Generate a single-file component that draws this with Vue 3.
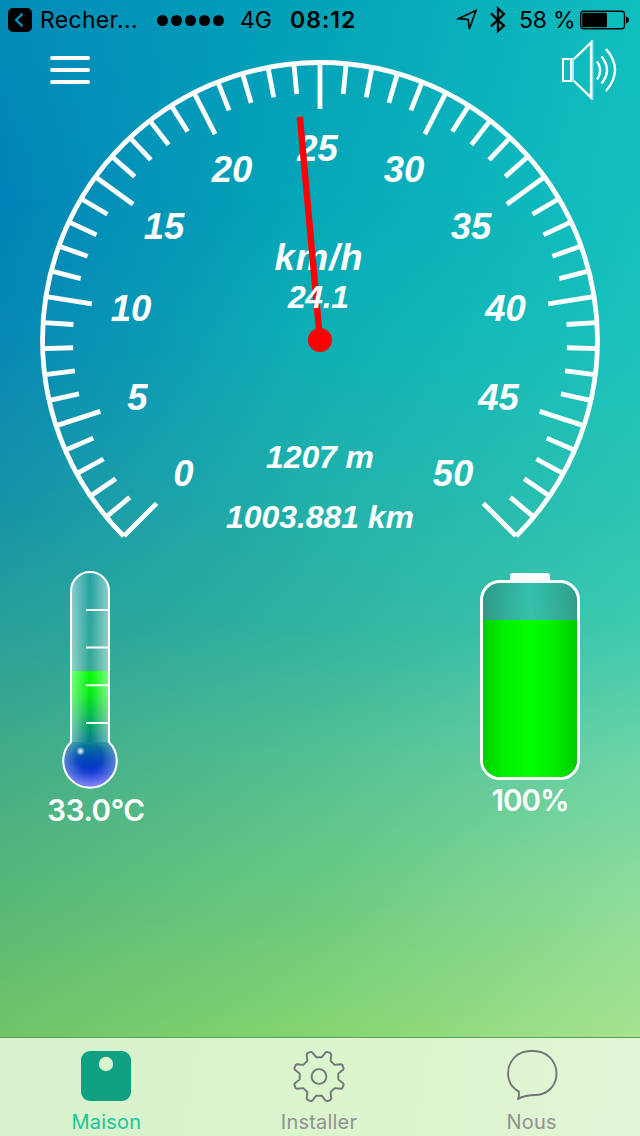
<template>
  <div class="screen">
    <div class="backdrop">
      <div v-for="(layer, i) in layers" :key="i" class="layer" :style="layer"></div>
    </div>

    <div class="page">
      <header class="status">
        <svg class="back" width="24" height="24" viewBox="0 0 24 24">
          <rect width="24" height="24" rx="5" />
          <path d="M14.6 5.6 8.2 12l6.4 6.4" fill="none" stroke="#0590b9" stroke-width="2.4" />
        </svg>
        <span class="app-name">Recher...</span>
        <div class="signal"><i v-for="n in 5" :key="n"></i></div>
        <span class="network">4G</span>
        <span class="time">08:12</span>
        <svg class="location" width="22" height="22" viewBox="0 0 22 22">
          <path d="M2.6 9.6 20 1.600 13.300 20 12.200 10.400Z" fill="none" stroke="#000" stroke-width="1.6" />
        </svg>
        <svg class="bluetooth" width="16" height="28" viewBox="0 0 16 28">
          <path d="M1 7.3 14 19.8 8 25V2.6l6 5.4L1 20.4" fill="none" stroke="#000" stroke-width="2.3" />
        </svg>
        <span class="percent">58 %</span>
        <svg class="power" width="50" height="20" viewBox="0 0 50 20">
          <rect x=".7" y="1.2" width="43.8" height="17.6" rx="3" fill="none" stroke="#000" stroke-width="1.4" />
          <rect x="2.2" y="2.8" width="24.8" height="14.4" rx="1.5" />
          <path d="M46 6.6c4 .8 4 6 0 6.8z" />
        </svg>
      </header>

      <main class="dash">
        <svg class="gauge" width="640" height="520" viewBox="0 40 640 520">
          <path class="line" :d="arc" />
          <line
            v-for="t in ticks"
            :key="t.i"
            class="line"
            :x1="t.x1"
            :y1="t.y1"
            :x2="t.x2"
            :y2="t.y2"
          />
          <text v-for="l in labels" :key="l.v" class="num" :x="l.x" :y="l.y">{{ l.v }}</text>
          <text class="num unit" x="319" y="270">km/h</text>
          <line class="needle" x1="320" y1="340" :x2="tip.x" :y2="tip.y" />
          <circle cx="320" cy="340" r="12" fill="#f00" />
          <text class="small" x="318.5" y="308" textLength="61">{{ speed }}</text>
          <text class="small" x="320" y="468" textLength="108">1207 m</text>
          <text class="small" x="320" y="528" textLength="188">1003.881 km</text>
        </svg>
        <div class="toolbar">
          <div class="menu"><i></i><i></i><i></i></div>
          <svg width="56" height="62" viewBox="561 40 56 62" fill="none" stroke="#fff" stroke-width="2">
            <rect x="563" y="59" width="8" height="22" />
            <path d="M572.5 58v24" stroke-opacity=".7" stroke-width="3" />
            <path d="M574 59 591 42.500v55L574 81" stroke-width="2.3" />
            <path d="M592.5 40v60" stroke-opacity=".5" />
            <path d="M597 61.5Q603.5 70 597 79.5" stroke-width="2.4" />
            <path d="M601.5 56.5Q612.5 70 601.5 83.5" stroke-width="2.4" />
            <path d="M606 49Q624 70 606 91" stroke-width="2.4" />
          </svg>
        </div>
      </main>

      <section class="meters">
        <div class="meter thermo">
          <svg width="60" height="220" viewBox="60 570 60 220">
            <defs>
              <linearGradient id="glass">
                <stop offset="0" stop-color="#fff" stop-opacity=".48" />
                <stop offset=".5" stop-color="#fff" stop-opacity="0" />
                <stop offset="1" stop-color="#fff" stop-opacity=".48" />
              </linearGradient>
              <linearGradient id="heat" x1="0" y1="0" x2="0" y2="1">
                <stop offset="0" stop-color="#0f0" />
                <stop offset=".2" stop-color="#00ec12" />
                <stop offset=".42" stop-color="#00ac58" />
                <stop offset=".6" stop-color="#007a8c" />
                <stop offset=".75" stop-color="#0046b8" />
                <stop offset=".87" stop-color="#0029d2" />
                <stop offset="1" stop-color="#2a2af0" />
              </linearGradient>
              <radialGradient id="bulb" gradientUnits="userSpaceOnUse" cx="90" cy="757" r="31">
                <stop offset="0" stop-color="#fff" stop-opacity="0" />
                <stop offset=".4" stop-color="#fff" stop-opacity=".03" />
                <stop offset="1" stop-color="#fff" stop-opacity=".46" />
              </radialGradient>
              <radialGradient id="spark">
                <stop offset="0" stop-color="#fff" />
                <stop offset="1" stop-color="#fff" stop-opacity="0" />
              </radialGradient>
              <clipPath id="tube"><path :d="tube" /></clipPath>
            </defs>
            <g clip-path="url(#tube)">
              <rect x="60" y="671" width="60" height="118" fill="url(#heat)" />
              <rect x="71" y="570" width="38" height="172" fill="url(#glass)" />
              <rect x="60" y="742" width="60" height="48" fill="url(#bulb)" />
            </g>
            <path d="M86 610h23M86 647.5h23M86 685.2h23M86 723h23" stroke="#fff" stroke-width="2" />
            <path :d="tube" fill="none" stroke="#fff" stroke-width="2" />
            <circle cx="80.5" cy="751.2" r="4.5" fill="url(#spark)" />
          </svg>
          <span>33.0°C</span>
        </div>
        <div class="meter batt">
          <div class="cap"></div>
          <div class="cell"><div class="charge"></div></div>
          <span>100%</span>
        </div>
      </section>

      <nav class="tabs">
        <div class="tab active">
          <svg width="52" height="52" viewBox="0 0 52 52">
            <rect x="1" y="1" width="50" height="50" rx="9" fill="#10a183" />
            <circle cx="26" cy="14" r="7.2" fill="#d9f3cd" />
          </svg>
          <span>Maison</span>
        </div>
        <div class="tab">
          <svg class="outline" width="54" height="52" viewBox="-27 -26.5 54 52">
            <path :d="gear" />
            <circle r="7.4" />
          </svg>
          <span>Installer</span>
        </div>
        <div class="tab">
          <svg class="outline" width="52" height="52" viewBox="507 1050 52 52">
            <path
              d="M520.6 1092.2C513 1088 509 1081 509 1073.5 509 1060.5 519 1051 531 1051h4C547 1051 557.5 1060.5 557.5 1073.5 557.5 1085 549 1094.8 537 1095 530 1095 524 1096 519 1099Q520.8 1095 519.4 1091.5"
            />
          </svg>
          <span>Nous</span>
        </div>
      </nav>
    </div>
  </div>
</template>

<script setup>
import { ref, computed } from 'vue'

const speed = ref(24.1)

// horizontal colour rows, blended into each other from top to bottom
const rows = [
  { y: 0, c: ['#038bb9', '#03a3b9', '#10bfbf'] },
  { y: 200, c: ['#0283b8', '#05a8b8', '#14c0be'] },
  { y: 340, c: ['#0787b4', '#0fb0b5', '#1cc2bb'] },
  { y: 500, c: ['#1793a8', '#22b1ab', '#2cc5b4'] },
  { y: 620, c: ['#279f9b', '#30b3a1', '#3ccab0'] },
  { y: 760, c: ['#43ac87', '#54c092', '#6dd4a6'] },
  { y: 900, c: ['#58b877', '#6bca80', '#8fdd9b'] },
  { y: 1036, c: ['#6ec467', '#85d571', '#a6e28e'] }
]

const layers = rows.map((row, i) => {
  const style = { background: `linear-gradient(90deg, ${row.c.join(', ')})` }
  if (i > 0) {
    style.maskImage = `linear-gradient(transparent ${rows[i - 1].y}px, #000 ${row.y}px)`
  }
  return style
})

const point = (r, deg) => {
  const a = (deg * Math.PI) / 180
  return { x: 320 + r * Math.sin(a), y: 340 - r * Math.cos(a) }
}

const from = point(277.5, -135)
const to = point(277.5, 135)
const arc = `M${from.x} ${from.y}A277.5 277.5 0 1 1 ${to.x} ${to.y}`

const ticks = []
for (let i = 0; i <= 50; i++) {
  const deg = -135 + i * 5.4
  const a = point(277, deg)
  const b = point(i % 5 === 0 ? 231 : 247, deg)
  ticks.push({ i, x1: a.x, y1: a.y, x2: b.x, y2: b.y })
}

const labels = [
  { v: 0, x: 183.5, y: 486 },
  { v: 5, x: 137.5, y: 410 },
  { v: 10, x: 131, y: 321 },
  { v: 15, x: 164, y: 239 },
  { v: 20, x: 232, y: 182 },
  { v: 25, x: 317.5, y: 161 },
  { v: 30, x: 404, y: 182 },
  { v: 35, x: 471, y: 239 },
  { v: 40, x: 505.5, y: 321 },
  { v: 45, x: 498.5, y: 410 },
  { v: 50, x: 453, y: 486 }
]

const tip = computed(() => point(224, -135.3 + speed.value * 5.4))

const tube = 'M71 742V591a19 19 0 0 1 38 0V742A26.8 26.8 0 1 1 71 742Z'

// 8 teeth, the first one half a step off the vertical
const gear = (() => {
  const pts = []
  for (let k = 0; k < 8; k++) {
    const mid = 22.5 + k * 45
    const shape = [[19.5, -14], [25, -7], [26, -4], [26, 4], [25, 7], [19.5, 14]]
    shape.forEach(([r, d]) => {
      const p = point(r, mid + d)
      pts.push(`${(p.x - 320).toFixed(2)} ${(p.y - 340).toFixed(2)}`)
    })
  }
  return `M${pts.join('L')}Z`
})()
</script>

<style>
body {
  margin: 0;
}
</style>

<style scoped>
.screen {
  display: grid;
  width: 640px;
  height: 1136px;
  overflow: hidden;
  font-family: Inter, 'Liberation Sans', sans-serif;
}

.backdrop,
.page {
  grid-area: 1 / 1;
}

.backdrop {
  display: grid;
}

.layer {
  grid-area: 1 / 1;
}

.page {
  z-index: 1;
  display: flex;
  flex-direction: column;
  min-height: 0;
}

/* status bar */
.status {
  display: flex;
  align-items: center;
  height: 40px;
  box-sizing: border-box;
  padding-left: 8px;
  font-size: 23px;
  line-height: 40px;
  white-space: nowrap;
  flex: none;
}

.status svg {
  flex: none;
}

.app-name {
  width: 109px;
  padding-left: 8px;
  box-sizing: border-box;
  letter-spacing: 0.3px;
}

.signal {
  display: flex;
  gap: 3px;
  margin-left: 16px;
}

.signal i {
  width: 11px;
  height: 11px;
  border-radius: 50%;
  background: #000;
}

.network {
  width: 50px;
  margin-left: 16px;
}

.time {
  width: 166px;
  font-weight: 600;
  letter-spacing: 1px;
}

.bluetooth {
  margin-left: 12px;
}

.percent {
  width: 61px;
  margin-left: 13px;
  box-sizing: border-box;
  letter-spacing: -0.2px;
}

/* gauge */
.dash {
  display: grid;
  height: 520px;
  flex: none;
}

.gauge,
.toolbar {
  grid-area: 1 / 1;
}

.toolbar {
  display: flex;
  justify-content: space-between;
  align-items: flex-start;
  padding: 0 23px 0 50px;
}

.menu {
  display: flex;
  flex-direction: column;
  gap: 8px;
  padding-top: 16px;
}

.menu i {
  width: 40px;
  height: 4px;
  border-radius: 2px;
  background: #fff;
}

.line {
  fill: none;
  stroke: #fff;
  stroke-width: 4.8;
}

.needle {
  stroke: #f00;
  stroke-width: 6.4;
}

.num,
.small {
  font-family: 'Liberation Sans', sans-serif;
  font-weight: bold;
  font-style: italic;
  font-size: 36.5px;
  fill: #fff;
  text-anchor: middle;
}

.unit {
  letter-spacing: 1px;
}

.small {
  font-size: 32px;
}

/* thermometer and battery */
.meters {
  display: flex;
  justify-content: space-between;
  flex: 1;
  padding: 10px 60px 0 48px;
}

.meter {
  display: flex;
  flex-direction: column;
  align-items: center;
  color: #fff;
  font-size: 29.5px;
  font-weight: 600;
  letter-spacing: -0.4px;
  line-height: 40px;
}

.thermo {
  width: 96px;
}

.thermo svg {
  margin-right: 12px;
}

.thermo span {
  white-space: nowrap;
}

.batt {
  width: 100px;
  padding-top: 3px;
}

.batt span {
  letter-spacing: -1px;
}

.cap {
  width: 40px;
  height: 8px;
  border-radius: 3px 3px 0 0;
  background: #fff;
}

.cell {
  display: flex;
  align-items: flex-end;
  width: 100px;
  height: 200px;
  margin-top: -1px;
  box-sizing: border-box;
  border: 3px solid #fff;
  border-radius: 20px;
  overflow: hidden;
  background: linear-gradient(90deg, rgba(30, 60, 50, 0.28), transparent 50%, rgba(30, 60, 50, 0.28));
}

.charge {
  width: 100%;
  height: 157px;
  background: linear-gradient(90deg, #00cf00, #00f000 22%, #0f0 50%, #00ee00 76%, #00cb00);
}

/* tab bar */
.tabs {
  display: flex;
  flex: none;
  height: 99px;
  box-sizing: border-box;
  padding-right: 2px;
  border-top: 1px solid #5f9e58;
  background: linear-gradient(100deg, #d6f1cc, #dbf5cd 50%, #e2f5d5);
}

.tab {
  flex: 1;
  display: flex;
  flex-direction: column;
  align-items: center;
  padding-top: 12px;
  box-sizing: border-box;
  color: #929292;
  font-size: 20px;
  line-height: 24px;
  letter-spacing: 0.2px;
}

.tab span {
  margin-top: 8px;
}

.active {
  color: #19c79d;
}

.outline {
  fill: none;
  stroke: #757578;
  stroke-width: 1.9;
  stroke-linejoin: round;
}
</style>
